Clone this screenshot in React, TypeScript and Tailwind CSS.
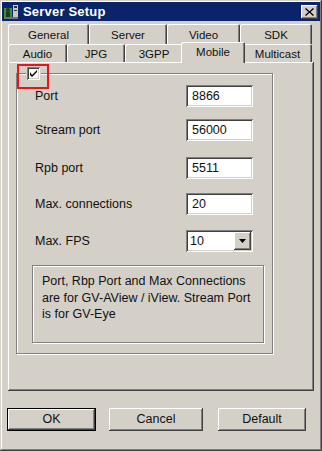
import React from 'react'

const raised = 'shadow-[inset_-1px_-1px_#404040,inset_1px_1px_#ffffff,inset_-2px_-2px_#808080]'
const sunken = 'shadow-[inset_1px_1px_#808080,inset_-1px_-1px_#ffffff,inset_2px_2px_#404040,inset_-2px_-2px_#d4d0c8]'

function Tab({ label, w }: { label: string; w: string }) {
  return (
    <div
      className={`${w} h-full flex items-center justify-center pt-[3px] text-[11.5px] rounded-t-[2px] shadow-[inset_1px_1px_#ffffff,inset_-1px_0_#404040,inset_-2px_0_#808080]`}
    >
      {label}
    </div>
  )
}

function Field({ label, value, mt }: { label: string; value: string; mt: string }) {
  return (
    <div className={`${mt} flex items-center h-[22px]`}>
      <div className="w-[169px] pl-[18px] text-[12.5px]">{label}</div>
      <div className={`w-[67px] h-[22px] bg-white ${sunken} flex items-center pl-[6px] text-[12.5px]`}>{value}</div>
    </div>
  )
}

export default function App() {
  return (
    <div className="w-[322px] h-[451px] bg-[#d4d0c8] p-[2px] flex flex-col font-['Liberation_Sans',Arial,sans-serif] text-[#111] shadow-[inset_-1px_-1px_#404040,inset_1px_1px_#d4d0c8,inset_-2px_-2px_#808080,inset_2px_2px_#ffffff]">
      {/* title bar */}
      <div className="h-[19px] bg-[#0a246a] flex items-center pl-[1px] pr-[2px]">
        <svg width="17" height="17" viewBox="0 0 17 17">
          <rect x="1" y="5" width="8" height="9" fill="#3c8c3c" />
          <circle cx="5" cy="7" r="2" fill="#1c3c1c" />
          <rect x="3" y="9" width="4" height="5" fill="#1c3c1c" />
          <rect x="10" y="2" width="5" height="12" fill="#c8c8c8" />
          <rect x="11" y="3" width="3" height="2" fill="#303030" />
          <rect x="11" y="7" width="3" height="1" fill="#303030" />
          <rect x="1" y="14" width="14" height="2" fill="#707070" />
        </svg>
        <span className="ml-[3px] text-white font-bold text-[13px] tracking-[0.2px]">Server Setup</span>
        <div className="flex-1" />
        <div className={`w-[17px] h-[14px] bg-[#d4d0c8] ${raised} flex items-center justify-center`}>
          <svg width="9" height="8" viewBox="0 0 9 8">
            <path d="M1 0 L4.5 3.2 L8 0 L9 1 L5.5 4 L9 7 L8 8 L4.5 4.8 L1 8 L0 7 L3.5 4 L0 1 Z" fill="#000" />
          </svg>
        </div>
      </div>

      {/* tabs */}
      <div className="ml-[6px] mt-[3px] w-[304px] h-[20px] flex">
        <Tab label="General" w="w-[81px]" />
        <Tab label="Server" w="w-[78px]" />
        <Tab label="Video" w="w-[73px]" />
        <Tab label="SDK" w="w-[72px]" />
      </div>
      <div className="ml-[6px] w-[304px] h-[18px] flex">
        <Tab label="Audio" w="w-[59px]" />
        <Tab label="JPG" w="w-[58px]" />
        <Tab label="3GPP" w="w-[58px]" />
        <div className="relative z-10 -mx-[2px] -mt-[2px] w-[64px] h-[21px] bg-[#d4d0c8] flex items-center justify-center text-[11.5px] rounded-t-[2px] shadow-[inset_1px_1px_#ffffff,inset_-1px_0_#404040,inset_-2px_0_#808080]">
          Mobile
        </div>
        <Tab label="Multicast" w="w-[69px]" />
      </div>

      {/* panel */}
      <div className={`ml-[6px] w-[306px] h-[329px] ${raised} pt-[11px] pl-[8px]`}>
        <div className="relative w-[257px] h-[281px] border border-[#808080] shadow-[1px_1px_#ffffff,inset_1px_1px_#ffffff] pt-[11px]">
          <div className="absolute left-[0px] top-[-10px] w-[32px] h-[25px] border-2 border-[#e8141b]" />
          <div className="absolute left-[9px] top-[-7px] px-[1px] bg-[#d4d0c8]">
            <div className={`w-[13px] h-[13px] bg-white ${sunken} flex items-center justify-center`}>
              <svg width="7" height="7" viewBox="0 0 7 7">
                <path d="M0 2 L0 5 L2 7 L7 2 L7 0 L2 5 Z" fill="#000" />
              </svg>
            </div>
          </div>

          <Field label="Port" value="8866" mt="mt-[0px]" />
          <Field label="Stream port" value="56000" mt="mt-[12px]" />
          <Field label="Rpb port" value="5511" mt="mt-[16px]" />
          <Field label="Max. connections" value="20" mt="mt-[14px]" />
          <div className="mt-[15px] flex items-center h-[22px]">
            <div className="w-[169px] pl-[18px] text-[12.5px]">Max. FPS</div>
            <div className={`relative w-[67px] h-[22px] bg-white ${sunken} flex items-center pl-[4px] text-[12.5px]`}>
              10
              <div className={`absolute right-[2px] top-[2px] w-[17px] h-[18px] bg-[#d4d0c8] ${raised} flex items-center justify-center`}>
                <svg width="7" height="4" viewBox="0 0 7 4">
                  <path d="M0 0 L7 0 L3.5 4 Z" fill="#000" />
                </svg>
              </div>
            </div>
          </div>

          <div className="ml-[15px] mt-[13px] w-[232px] h-[78px] border border-[#808080] shadow-[1px_1px_#ffffff,inset_1px_1px_#ffffff] pt-[7px] pl-[9px] text-[12.5px] leading-[16.5px]">
            Port, Rbp Port and Max Connections
            <br />
            are for GV-AView / iView. Stream Port
            <br />
            is for GV-Eye
          </div>
        </div>
      </div>

      {/* buttons */}
      <div className="mt-[17px] ml-[5px] flex text-[12.5px]">
        <div className="w-[89px] h-[23px] border border-black">
          <div className={`w-full h-full ${raised} flex items-center justify-center`}>OK</div>
        </div>
        <div className={`ml-[13px] w-[94px] h-[23px] ${raised} flex items-center justify-center`}>Cancel</div>
        <div className={`ml-[15px] w-[88px] h-[23px] ${raised} flex items-center justify-center`}>Default</div>
      </div>
    </div>
  )
}
